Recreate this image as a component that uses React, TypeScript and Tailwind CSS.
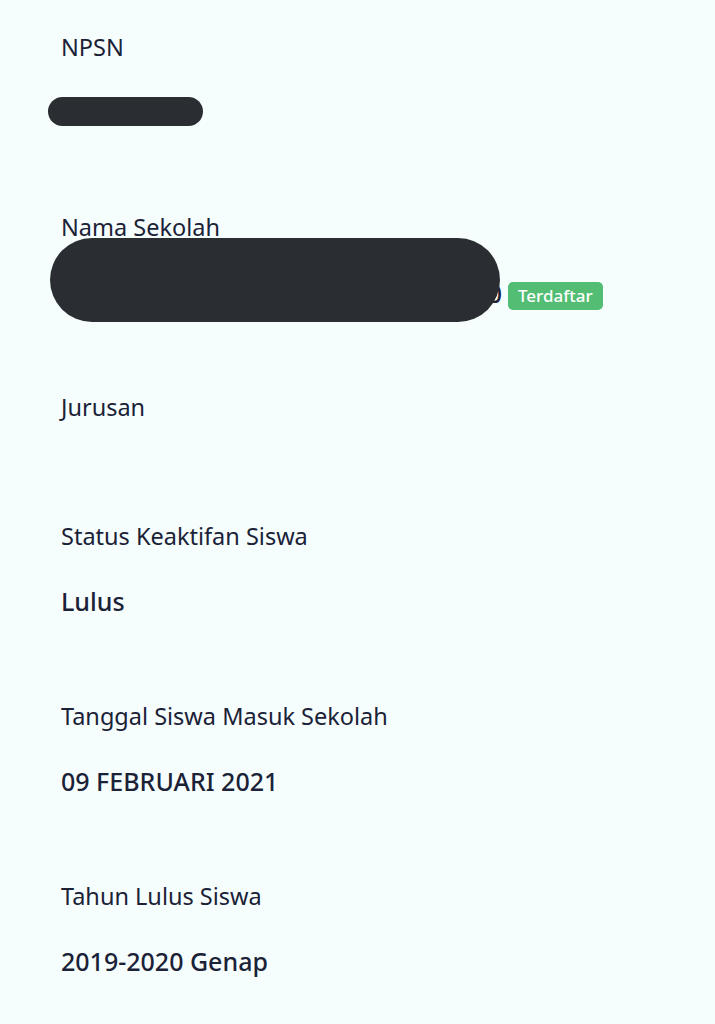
import type { ReactNode } from "react";

const font = { fontFamily: '"Noto Sans", "Open Sans", sans-serif' };

type Field = {
  label: string;
  value?: ReactNode;
};

function Redacted({ className }: { className: string }) {
  return <span className={`absolute bg-[#2a2e33] ${className}`} />;
}

function Section({ label, value }: Field) {
  return (
    <div className="pb-[83px]">
      <div className="h-8 text-[23.5px] leading-8 text-[#1b2238]">{label}</div>
      {value ? (
        <div className="mt-[33px] h-8 text-[25px] leading-8 font-medium text-[#1b2238]">
          {value}
        </div>
      ) : (
        <div className="mt-[14px] h-0" />
      )}
    </div>
  );
}

export default function App() {
  const fields: Field[] = [
    {
      label: "NPSN",
      value: (
        <span className="relative block">
          <span className="invisible">20100000</span>
          <Redacted className="-left-[13px] top-[1px] h-[29px] w-[155px] rounded-full" />
        </span>
      ),
    },
    {
      label: "Nama Sekolah",
      value: (
        <span className="relative flex items-center gap-[6px]">
          <span className="w-[441px] whitespace-nowrap text-right text-[#1b2238]">0</span>
          <span className="mt-[6px] h-[28px] rounded-[5px] bg-[#52bd73] px-[10px] text-[17px] leading-[28px] font-medium text-white">
            Terdaftar
          </span>
          <Redacted className="-left-[11px] -top-[38px] h-[84px] w-[450px] rounded-[42px]" />
        </span>
      ),
    },
    { label: "Jurusan" },
    { label: "Status Keaktifan Siswa", value: "Lulus" },
    { label: "Tanggal Siswa Masuk Sekolah", value: "09 FEBRUARI 2021" },
    { label: "Tahun Lulus Siswa", value: "2019-2020 Genap" },
  ];

  return (
    <div className="min-h-[1024px] bg-[#f5fefc] px-[61px] pt-[31px]" style={font}>
      {fields.map((f) => (
        <Section key={f.label} label={f.label} value={f.value} />
      ))}
    </div>
  );
}
